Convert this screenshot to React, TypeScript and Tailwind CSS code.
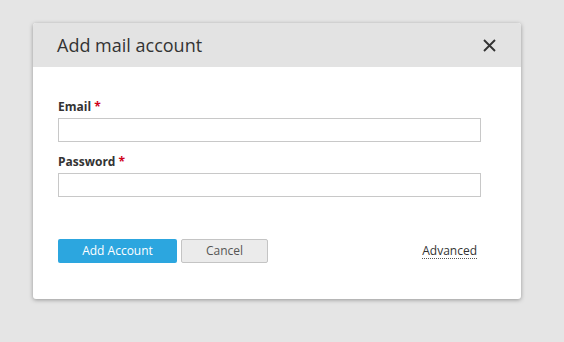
import React from "react";

function Field({ label }: { label: string }) {
  return (
    <div>
      <label className="block h-[17px] text-[12px] font-bold leading-[17px] text-[#333]">
        {label} <span className="text-[#d0021b]">*</span>
      </label>
      <input
        type="text"
        className="mt-[3px] block h-[24px] w-[423px] border border-[#c8c8c8] bg-white px-2 text-[12px] outline-none"
      />
    </div>
  );
}

export default function App() {
  return (
    <div
      className="h-[342px] w-[564px] bg-[#e5e5e5] pt-[23px] pl-[33px]"
      style={{ fontFamily: '"Open Sans", "Noto Sans", sans-serif' }}
    >
      <div className="w-[488px] overflow-hidden rounded-[3px] bg-white shadow-[0_1px_4px_rgba(0,0,0,0.35)]">
        <div className="flex h-[44px] items-center justify-between bg-[#e3e3e3] pl-[24px] pr-[25px]">
          <div className="text-[18px] text-[#333]">Add mail account</div>
          <button type="button" className="text-[#333]">
            <svg width="13" height="13" viewBox="0 0 13 13">
              <path d="M1 1 L12 12 M12 1 L1 12" stroke="#333" strokeWidth="1.9" />
            </svg>
          </button>
        </div>

        <div className="px-[25px] pt-[31px] pb-[36px]">
          <div className="flex flex-col gap-[11px]">
            <Field label="Email" />
            <Field label="Password" />
          </div>

          <div className="mt-[42px] flex w-[419px] items-center">
            <button
              type="button"
              className="h-[24px] w-[119px] rounded-[2px] bg-[#2ca6df] text-[12px] text-white"
            >
              Add Account
            </button>
            <button
              type="button"
              className="ml-[4px] h-[24px] w-[87px] rounded-[2px] border border-[#c4c4c4] bg-[#ebebeb] text-[12px] text-[#555]"
            >
              Cancel
            </button>
            <span className="ml-auto border-b border-dotted border-[#555] text-[12px] leading-[15px] text-[#333]">
              Advanced
            </span>
          </div>
        </div>
      </div>
    </div>
  );
}
